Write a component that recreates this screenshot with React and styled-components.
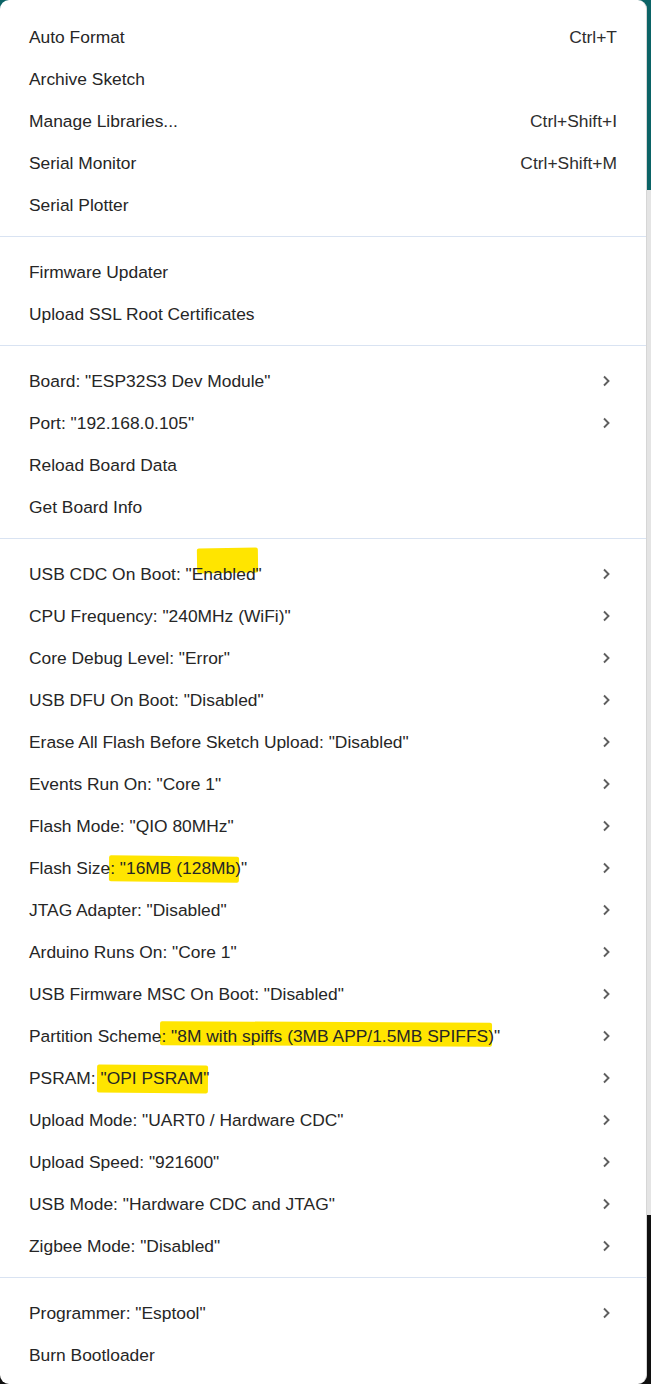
import React from "react";
import styled, { createGlobalStyle } from "styled-components";

const Global = createGlobalStyle`
  html, body { margin: 0; padding: 0; }
  body {
    width: 651px;
    height: 1384px;
    overflow: hidden;
    background: linear-gradient(
      to bottom,
      #0b6366 0px, #0b6366 190px,
      #e4e4e4 190px, #e4e4e4 1215px,
      #101010 1215px, #101010 100%
    );
    font-family: "Liberation Sans", Arial, sans-serif;
  }
`;

const Page = styled.div`
  display: flex;
  height: 1384px;
`;

const Menu = styled.div`
  width: 647px;
  height: 1384px;
  box-sizing: border-box;
  background: #ffffff;
  border-radius: 9px;
  border-right: 1px solid #d6d6d6;
  padding-top: 16px;
  display: flex;
  flex-direction: column;
`;

const Group = styled.div`
  display: flex;
  flex-direction: column;
`;

const Separator = styled.div`
  height: 1px;
  background: #d9e3f2;
  margin: 10px 0 14px;
`;

const Row = styled.div`
  height: 42px;
  display: flex;
  align-items: center;
  padding: 0 29px 0 29px;
  font-size: 17.4px;
  color: #262626;
  isolation: isolate;
`;

const Label = styled.span`
  flex: 1;
  white-space: nowrap;
`;

const Shortcut = styled.span`
  color: #2e2e2e;
`;

const Chevron = styled.svg`
  width: 10px;
  height: 12px;
  margin-right: 6px;
  flex: none;
`;

const Mark = styled.span`
  position: relative;
  &::before {
    content: "";
    position: absolute;
    z-index: -1;
    background: #ffe500;
    left: ${(p) => p.$l}px;
    right: ${(p) => p.$r}px;
    top: ${(p) => p.$t}px;
    bottom: ${(p) => p.$b}px;
    transform: rotate(${(p) => p.$rot || 0}deg);
    border-radius: 2px;
  }
`;

const Arrow = () => (
  <Chevron viewBox="0 0 10 12">
    <path d="M3 1.5 L7.5 6 L3 10.5" fill="none" stroke="#5f5f5f" strokeWidth="1.9" />
  </Chevron>
);

const Item = ({ children, shortcut, sub }) => (
  <Row>
    <Label>{children}</Label>
    {shortcut && <Shortcut>{shortcut}</Shortcut>}
    {sub && <Arrow />}
  </Row>
);

export default function App() {
  return (
    <>
      <Global />
      <Page>
        <Menu>
          <Group>
            <Item shortcut="Ctrl+T">Auto Format</Item>
            <Item>Archive Sketch</Item>
            <Item shortcut="Ctrl+Shift+I">Manage Libraries...</Item>
            <Item shortcut="Ctrl+Shift+M">Serial Monitor</Item>
            <Item>Serial Plotter</Item>
          </Group>
          <Separator />
          <Group>
            <Item>Firmware Updater</Item>
            <Item>Upload SSL Root Certificates</Item>
          </Group>
          <Separator />
          <Group>
            <Item sub>Board: "ESP32S3 Dev Module"</Item>
            <Item sub>Port: "192.168.0.105"</Item>
            <Item>Reload Board Data</Item>
            <Item>Get Board Info</Item>
          </Group>
          <Separator />
          <Group>
            <Item sub>
              USB CDC On Boot: "
              <Mark $l={5} $r={-2} $t={-16} $b={11} $rot={-0.8}>Enabled</Mark>"
            </Item>
            <Item sub>CPU Frequency: "240MHz (WiFi)"</Item>
            <Item sub>Core Debug Level: "Error"</Item>
            <Item sub>USB DFU On Boot: "Disabled"</Item>
            <Item sub>Erase All Flash Before Sketch Upload: "Disabled"</Item>
            <Item sub>Events Run On: "Core 1"</Item>
            <Item sub>Flash Mode: "QIO 80MHz"</Item>
            <Item sub>
              Flash Size
              <Mark $l={-1} $r={2} $t={-2} $b={-4} $rot={0.6}>: "16MB (128Mb)</Mark>"
            </Item>
            <Item sub>JTAG Adapter: "Disabled"</Item>
            <Item sub>Arduino Runs On: "Core 1"</Item>
            <Item sub>USB Firmware MSC On Boot: "Disabled"</Item>
            <Item sub>
              Partition Scheme
              <Mark $l={-1} $r={2} $t={-4} $b={0} $rot={0.3}>: "8M with spiffs (3MB APP/1.5MB SPIFFS)</Mark>"
            </Item>
            <Item sub>
              PSRAM:{" "}
              <Mark $l={-4} $r={2} $t={-3} $b={-5} $rot={0.5}>"OPI PSRAM"</Mark>
            </Item>
            <Item sub>Upload Mode: "UART0 / Hardware CDC"</Item>
            <Item sub>Upload Speed: "921600"</Item>
            <Item sub>USB Mode: "Hardware CDC and JTAG"</Item>
            <Item sub>Zigbee Mode: "Disabled"</Item>
          </Group>
          <Separator />
          <Group>
            <Item sub>Programmer: "Esptool"</Item>
            <Item>Burn Bootloader</Item>
          </Group>
        </Menu>
      </Page>
    </>
  );
}
